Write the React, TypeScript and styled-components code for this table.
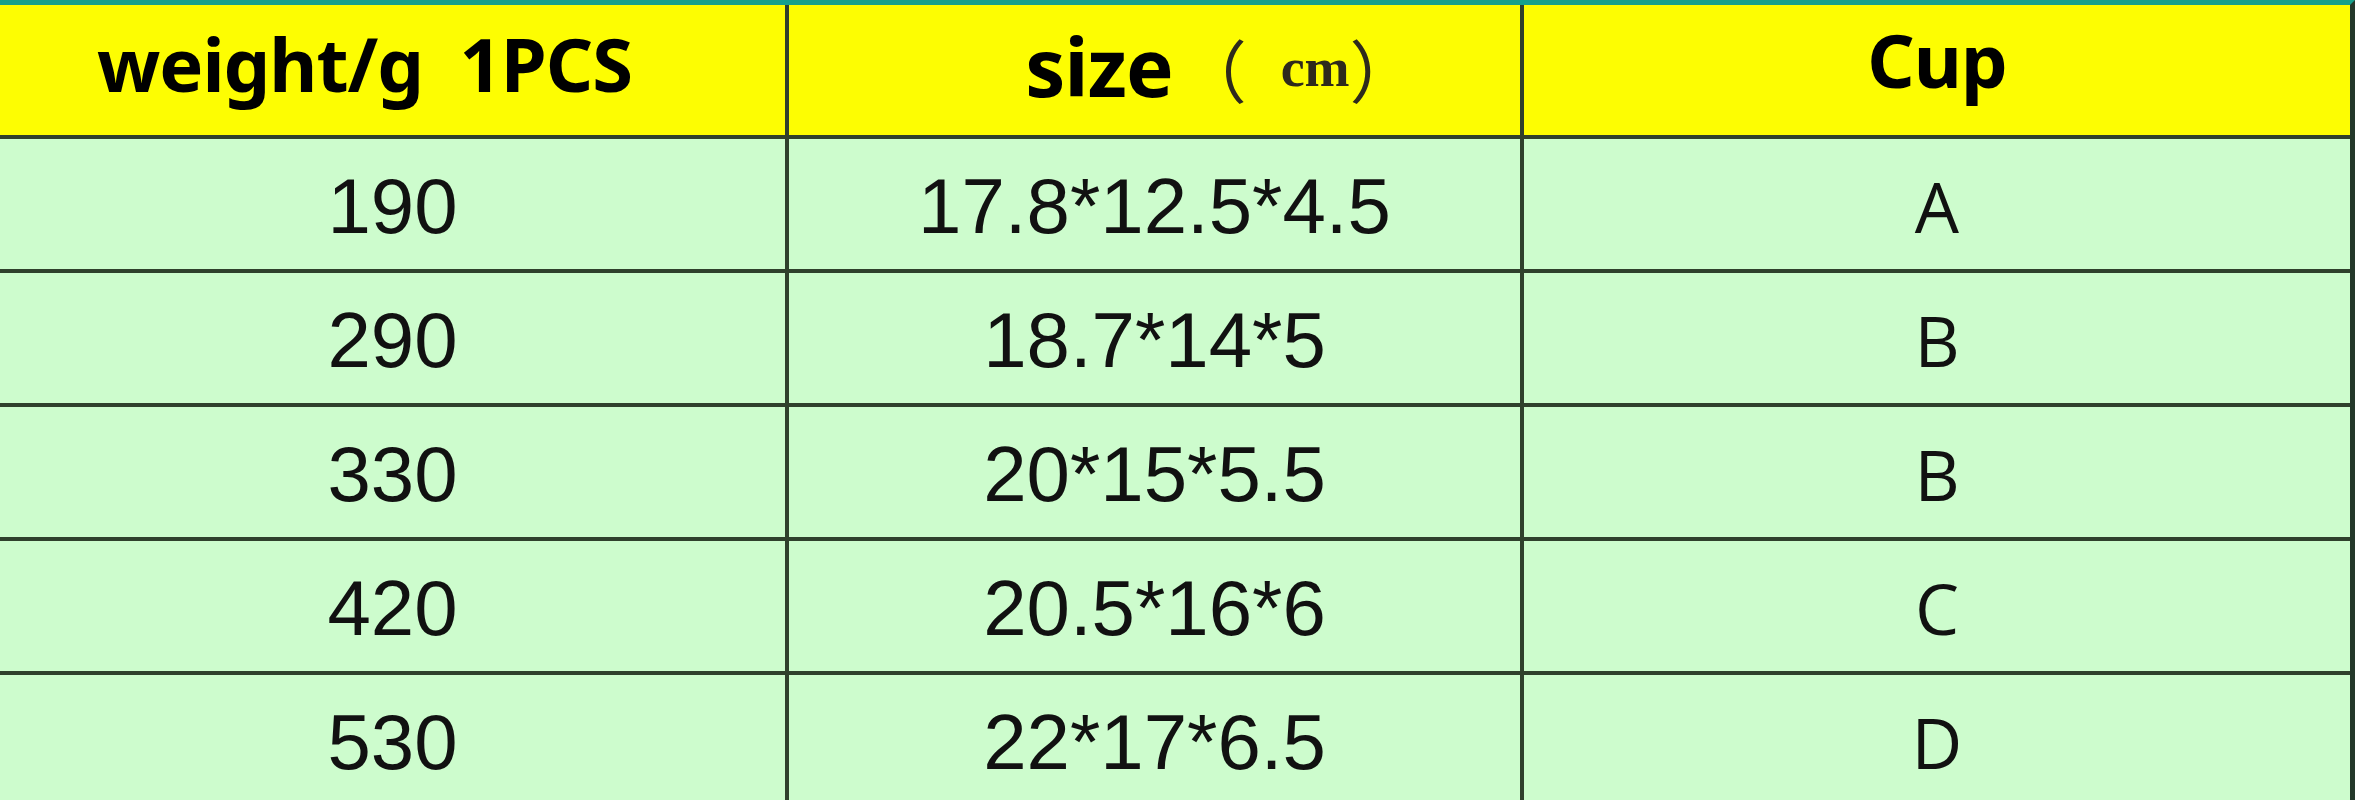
import styled, { createGlobalStyle } from "styled-components";

const GlobalStyle = createGlobalStyle`
  html, body {
    margin: 0;
    padding: 0;
    background: #ccfccc;
  }
`;

const Sheet = styled.div`
  width: 2355px;
  height: 800px;
  overflow: hidden;
  box-sizing: border-box;
  border-top: 5px solid #16a08c;
  border-right: 5px solid #23382a;
  background: #2f402c;
`;

const Grid = styled.div`
  display: grid;
  grid-template-columns: 785px 731px 826px;
  grid-template-rows: 130px repeat(5, 130px);
  column-gap: 4px;
  row-gap: 4px;
`;

const HeadCell = styled.div<{ $shift?: number; $lift?: number }>`
  background: #fdfd02;
  display: flex;
  align-items: center;
  justify-content: center;
  padding-left: ${(p) => (p.$shift && p.$shift > 0 ? p.$shift * 2 : 0)}px;
  padding-right: ${(p) => (p.$shift && p.$shift < 0 ? -p.$shift * 2 : 0)}px;
  padding-bottom: ${(p) => p.$lift ?? 0}px;
  color: #000;
  font-family: "Noto Sans", "Open Sans", sans-serif;
  font-weight: 700;
  white-space: pre;
`;

const HeadText = styled.span<{ $size: number }>`
  font-size: ${(p) => p.$size}px;
  letter-spacing: -1px;
`;

const Unit = styled.span`
  display: flex;
  align-items: center;
  font-family: "Liberation Serif", "Noto Sans CJK SC", serif;
  font-weight: 700;
  font-size: 54px;
  color: #2e2a1c;
  margin-left: 6px;
  padding-top: 6px;
`;

const Paren = styled.span<{ $open?: boolean }>`
  font-family: "Noto Sans CJK SC", sans-serif;
  font-weight: 400;
  font-size: 68px;
  margin-right: ${(p) => (p.$open ? 34 : 0)}px;
`;

const BodyCell = styled.div<{ $letter?: boolean }>`
  background: #cdfccd;
  display: flex;
  align-items: center;
  justify-content: center;
  color: #111;
  font-family: ${(p) =>
    p.$letter ? `"Open Sans", "Noto Sans", sans-serif` : `"Liberation Sans", Arial, sans-serif`};
  font-size: ${(p) => (p.$letter ? 70 : 78)}px;
  font-weight: 400;
  padding-top: 4px;
`;

const rows = [
  { weight: "190", size: "17.8*12.5*4.5", cup: "A" },
  { weight: "290", size: "18.7*14*5", cup: "B" },
  { weight: "330", size: "20*15*5.5", cup: "B" },
  { weight: "420", size: "20.5*16*6", cup: "C" },
  { weight: "530", size: "22*17*6.5", cup: "D" },
];

export default function App() {
  return (
    <>
      <GlobalStyle />
      <Sheet>
        <Grid>
          <HeadCell $shift={-28} $lift={14}>
            <HeadText $size={74}>{"weight/g  1PCS"}</HeadText>
          </HeadCell>
          <HeadCell $shift={67} $lift={10}>
            <HeadText $size={80}>size</HeadText>
            <Unit>
              <Paren $open>（</Paren>cm<Paren>）</Paren>
            </Unit>
          </HeadCell>
          <HeadCell $lift={22}>
            <HeadText $size={74}>Cup</HeadText>
          </HeadCell>
          {rows.map((r) => (
            <>
              <BodyCell key={r.weight + "w"}>{r.weight}</BodyCell>
              <BodyCell key={r.weight + "s"}>{r.size}</BodyCell>
              <BodyCell key={r.weight + "c"} $letter>
                {r.cup}
              </BodyCell>
            </>
          ))}
        </Grid>
      </Sheet>
    </>
  );
}
